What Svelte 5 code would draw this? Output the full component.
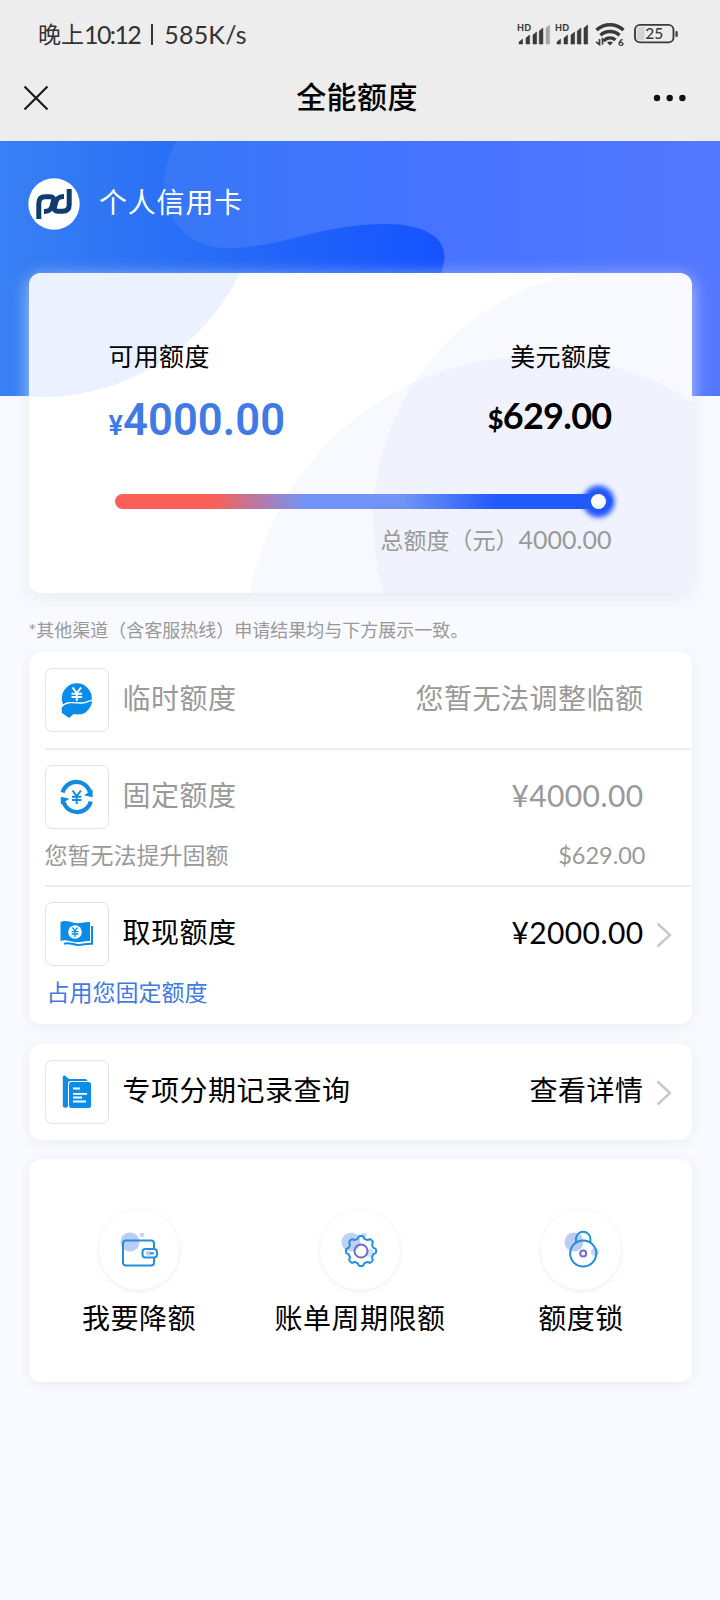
<script lang="ts">
    interface Row {
        id: string;
        label: string;
        value: string;
        muted?: boolean;
        arrow?: boolean;
        note?: string;
        noteValue?: string;
    }

    const limits: Row[] = [
        { id: 'temp', label: '临时额度', value: '您暂无法调整临额', muted: true },
        { id: 'fixed', label: '固定额度', value: '¥4000.00', muted: true, note: '您暂无法提升固额', noteValue: '$629.00' },
        { id: 'cash', label: '取现额度', value: '¥2000.00', arrow: true, note: '占用您固定额度' },
    ];
    const records: Row[] = [
        { id: 'records', label: '专项分期记录查询', value: '查看详情', arrow: true },
    ];
    const actions = [
        { id: 'wallet', label: '我要降额' },
        { id: 'gear', label: '账单周期限额' },
        { id: 'lock', label: '额度锁' },
    ];

    const bars = [
        { x: 3, h: 5 },
        { x: 10, h: 9 },
        { x: 17, h: 12 },
        { x: 23.3, h: 16 },
        { x: 30, h: 19 },
    ];

    const available = 4000;
    const total = 4000;

    /* One half of the bank logo, the other is the same turned by 180° */
    const logoHalf = 'M10.8 41V25.500c0-5 2.500-6.800 6.500-6.800h4.700c3.500 0 4 2 3.300 5l-1.300 4.800c-1.200 3.700-3.200 5-8 5';

    /* Eight rounded teeth around the centre */
    function gearPath(cx: number, cy: number) {
        const pts: string[] = [];
        for (let i = 0; i <= 160; i++) {
            const a = (i / 160) * Math.PI * 2;
            const r = 13.8 + 1.3 * Math.tanh(2.2 * Math.cos(8 * a));
            pts.push(`${(cx + r * Math.cos(a)).toFixed(2)} ${(cy + r * Math.sin(a)).toFixed(2)}`);
        }
        return `M${pts.join('L')}Z`;
    }
</script>

{#snippet rowIcon(id: string)}
    <svg class="row-icon" viewBox="0 0 64 64" width="64" height="64">
        {#if id === 'temp'}
            <circle cx="31.800" cy="30.300" r="15" fill="#0c8ce9" />
            <path
                d="M16.500 40c2-2.500 4-4.300 7.500-4.600 5-.4 10 .8 15 .2 3-.4 4.500-2.300 8.300-2.300-1 5-4 9.700-8 12-3.500 1.500-7.500 1-11 1l-4.300 3.600-7-5Z"
                fill="#0c8ce9" stroke="#fff" stroke-width="2.800" paint-order="stroke"
            />
            <path d="m27.500 19.500 4.300 5.500 4.300-5.500M26.500 25.700h10.600M26.500 29h10.600M31.800 25v8" fill="none" stroke="#fff" stroke-width="2" />
        {:else if id === 'fixed'}
            <g fill="none" stroke="#118be0" stroke-width="4.200">
                <path d="M17.600 27.500a14.200 14.200 0 0 1 27.300-.5" />
                <path d="M45.800 36.500a14.200 14.200 0 0 1-27.300.5" />
            </g>
            <path d="M47.600 24.500v7.800l-8.600-2ZM15.800 39.500v-7.800l8.600 2Z" fill="#118be0" />
            <path d="m27.500 25.500 4.200 5.500 4.200-5.500M27 31.700h9.400M27 35h9.400M31.700 31v8" fill="none" stroke="#118be0" stroke-width="2" />
        {:else if id === 'cash'}
            <path d="M15.500 20c5-2 9-.2 13.500.8 6 1.300 10-1.500 16-.8v19c-6-.6-10 2-16 .9-4.500-.9-8.500-2.800-13.500-1Z" fill="#0c8ce9" />
            <path d="M47 24v17.700c-6-.6-10 2-16 1-4.500-.8-8.500-2.300-12-1" fill="none" stroke="#0c8ce9" stroke-width="2" />
            <circle cx="30" cy="30" r="6.800" fill="#fff" />
            <path d="m27.500 25.500 2.500 3.500 2.500-3.500M26.600 29.700h6.800M26.600 32h6.800M30 29v6" fill="none" stroke="#0c8ce9" stroke-width="1.300" />
        {:else}
            <path d="M17.800 17.300c0-2 1.700-2.300 3-1l3 2.700H40c1.500 0 2.300.8 2.300 2H26c-2.300 0-3 1-3 3.300v21.200c0 3-5.200 3-5.200 0Z" fill="#0c8ce9" />
            <rect x="24" y="22" width="22" height="26" rx="2.500" fill="#0c8ce9" />
            <path d="M28 28.500h7M28 33.800h14M28 37.500h9M28 41.500h13" stroke="#fff" stroke-width="1.800" />
        {/if}
    </svg>
{/snippet}

{#snippet limitRow(row: Row)}
    <div class="row">
        <div class="row-main" class:muted={row.muted}>
            <span class="icon-box">{@render rowIcon(row.id)}</span>
            <span class="label">{row.label}</span>
            <span class="value" class:money={row.value.startsWith('¥')}>{row.value}</span>
            <span class="arrow">
                {#if row.arrow}
                    <svg viewBox="0 0 16 26" width="16" height="26">
                        <path d="m1.500 1.500 12.500 11.500L1.500 24.500" fill="none" stroke="#c8c8c8" stroke-width="2.400" />
                    </svg>
                {/if}
            </span>
        </div>
        {#if row.note}
            <div class="row-note" class:link={!row.muted}>
                <span>{row.note}</span>
                <span>{row.noteValue ?? ''}</span>
            </div>
        {/if}
    </div>
{/snippet}

<div class="screen">
    <header>
        <div class="status">
            <span class="time">
                <span class="cjk">晚上</span><span class="clock">10:12</span><i></i><span>585K/s</span>
            </span>
            <svg viewBox="0 0 164 28" width="164" height="28">
                {#each [0, 38] as dx}
                    <text class="hd" x={1 + dx} y="11">HD</text>
                    {#each bars as b, i}
                        <path
                            d={`M${b.x + dx} 24v${3 - b.h}l3.600-3V24Z`}
                            fill={dx === 0 && i === 4 ? '#a8a8a8' : '#3a3a3a'}
                            stroke={dx === 0 && i === 4 ? '#a8a8a8' : '#3a3a3a'}
                            stroke-width=".6"
                            stroke-linejoin="round"
                        />
                    {/each}
                {/each}
                <g fill="none" stroke="#3a3a3a" stroke-width="3.500">
                    <path d="M80.500 10a20 20 0 0 1 27 0" />
                    <path d="M84.500 15.300a14 14 0 0 1 19 0" />
                    <path d="M88.500 20a8.500 8.500 0 0 1 11 0" />
                </g>
                <path d="M91 22.600a5 5 0 0 1 6 0L94 25.600Z" fill="#3a3a3a" />
                <path d="M83.500 19v5.500l-3.500-2.700M86.500 24.500V19l3 2.500" fill="none" stroke="#3a3a3a" stroke-width="1.700" />
                <text class="six" x="102" y="25.500">6</text>
                <rect x="121" y="7" width="7.500" height="13.500" fill="#d4d4d4" />
                <rect x="119" y="4.900" width="38.500" height="17.500" rx="5" fill="none" stroke="#3a3a3a" stroke-width="1.900" />
                <rect x="159.500" y="11" width="2.200" height="6" rx="1" fill="#3a3a3a" />
                <text class="battery" x="138.300" y="19.200">25</text>
            </svg>
        </div>
        <nav>
            <svg viewBox="0 0 26 26" width="26" height="26">
                <path d="m1.500 1.500 23 23m0-23-23 23" stroke="#1b1b1b" stroke-width="2.200" />
            </svg>
            <h1>全能额度</h1>
            <svg viewBox="0 0 34 8" width="34" height="8" fill="#111">
                <circle cx="4" cy="4" r="3.200" />
                <circle cx="16.700" cy="4" r="3.200" />
                <circle cx="29.400" cy="4" r="3.200" />
            </svg>
        </nav>
    </header>

    <section class="hero">
        <svg class="hero-bg" viewBox="0 0 720 255" width="720" height="255">
            <defs>
                <linearGradient id="base" x1="0" y1="0" x2="1" y2="0">
                    <stop offset="0" stop-color="#3880f4" />
                    <stop offset=".3" stop-color="#266bf6" />
                    <stop offset=".62" stop-color="#1552ff" />
                </linearGradient>
                <linearGradient id="blob" x1="0" y1="0" x2="1" y2="0">
                    <stop offset="0" stop-color="#3777f6" />
                    <stop offset=".5" stop-color="#4673ff" />
                    <stop offset="1" stop-color="#5578ff" />
                </linearGradient>
            </defs>
            <rect width="720" height="255" fill="url(#base)" />
            <path d="M177 0C160 26 160 62 176 82c13 18 30 25 54 25 50 0 90-24 156-24 38 0 62 14 58 37-3 20-16 40-20 136h296V0Z" fill="url(#blob)" />
        </svg>
        <div class="account">
            <svg viewBox="0 0 52 52" width="52" height="52">
                <circle cx="26" cy="26" r="25.700" fill="#fff" />
                <g fill="none" stroke="#103c70" stroke-width="5">
                    <path d={logoHalf} />
                    <path d={logoHalf} transform="rotate(180 26 26)" />
                </g>
            </svg>
            <span>个人信用卡</span>
        </div>
    </section>

    <main>
        <section class="card summary">
            <svg class="summary-bg" viewBox="0 0 663 320" width="663" height="320">
                <circle cx="13" cy="-96" r="220" fill="#ebf1ff" />
                <circle cx="597" cy="248" r="253" fill="#4a6ef0" fill-opacity=".042" />
                <circle cx="506" cy="373" r="290" fill="#4a6ef0" fill-opacity=".038" />
            </svg>
            <div class="amounts">
                <div>
                    <p>可用额度</p>
                    <strong class="cny"><small>¥</small>{available.toFixed(2)}</strong>
                </div>
                <div class="right">
                    <p>美元额度</p>
                    <strong class="usd"><small>$</small>629.00</strong>
                </div>
            </div>
            <div class="track">
                <div class="fill" style="width: {(available / total) * 100}%"><b></b></div>
            </div>
            <p class="total">总额度（元）<span>{total.toFixed(2)}</span></p>
        </section>

        <p class="tip">*其他渠道（含客服热线）申请结果均与下方展示一致。</p>

        <section class="card list">
            {#each limits as row}
                {@render limitRow(row)}
            {/each}
        </section>

        <section class="card list single">
            {#each records as row}
                {@render limitRow(row)}
            {/each}
        </section>

        <section class="card actions">
            {#each actions as a}
                <div class="action">
                    <span class="bubble">
                        <svg viewBox="0 0 80 80" width="80" height="80" fill="none" stroke="#2490d8" stroke-width="2">
                            {#if a.id === 'wallet'}
                                <circle cx="31" cy="32" r="9.500" fill="#b9ccf5" stroke="none" />
                                <circle cx="43" cy="25" r="2.300" fill="#cbd5ee" stroke="none" />
                                <path d="M55 38v-4.500c0-2-1.300-3-3-3H27c-2 0-3 1-3 3v19c0 2 1 3 3 3h25c2 0 3-1 3-3V48" />
                                <rect x="43.500" y="39" width="14.500" height="8.500" rx="3" />
                                <circle cx="49.500" cy="43.300" r="2.500" fill="#b9ccf5" stroke="none" />
                                <path d="M51 43.300h4" />
                            {:else if a.id === 'gear'}
                                <circle cx="31" cy="32" r="9.500" fill="#c0d0f6" stroke="none" />
                                <circle cx="44" cy="25.500" r="2.500" fill="#c9d6f5" stroke="none" />
                                <circle cx="50" cy="43" r="4" fill="#cfe0fa" stroke="none" />
                                <path d={gearPath(41, 41)} />
                                <circle cx="41" cy="41" r="6.500" stroke="#6b6fc9" />
                            {:else}
                                <circle cx="33" cy="32" r="9.500" fill="#bccbf4" stroke="none" />
                                <circle cx="54" cy="42" r="4" fill="#c3d3f6" stroke="none" />
                                <path d="M35 33v-4a7.200 7.200 0 0 1 14.400 0v4" />
                                <circle cx="42.200" cy="43.500" r="13" />
                                <circle cx="42.200" cy="43.500" r="3" stroke="#6b6fc9" />
                            {/if}
                        </svg>
                    </span>
                    <span>{a.label}</span>
                </div>
            {/each}
        </section>
    </main>
</div>

<style>
    :global(body) { background: #f8faff; }

    .screen {
        width: 720px;
        min-height: 1600px;
        background: #f8faff;
        color: #000;
        font-family: Lato, "Noto Sans CJK SC", sans-serif;
        font-size: 28px;
        letter-spacing: 0.5px;
    }
    p, h1 { margin: 0; font-weight: 400; }
    svg   { display: block; flex: none; }

    /* Top bars */
    header  { height: 141px; background: #ededed; }
    .status {
        height: 68px;
        padding: 0 40px 0 38px;
        display: flex;
        align-items: center;
        justify-content: space-between;
        color: #333;
    }
    .time   { display: flex; align-items: center; font-size: 25px; line-height: 30px; letter-spacing: 0.2px; white-space: nowrap; }
    .time i { width: 2px; height: 21px; margin: 0 11px; background: #333; }
    .cjk    { font-size: 23px; letter-spacing: 0; }
    .clock  { letter-spacing: -1.6px; }
    .hd      { font-size: 9px; font-weight: 900; letter-spacing: 0.2px; fill: #3a3a3a; }
    .six     { font-size: 10px; font-weight: 900; letter-spacing: 0; fill: #3a3a3a; }
    .battery { font-size: 15.5px; font-weight: 500; letter-spacing: 0; text-anchor: middle; fill: #3a3a3a; }
    nav {
        height: 60px;
        padding: 0 33px 0 23px;
        display: flex;
        align-items: center;
        justify-content: space-between;
    }
    h1 { margin: -4px 0 0 12px; font-size: 30px; font-weight: 500; line-height: 40px; letter-spacing: 0.4px; }

    /* Blue banner */
    .hero    { position: relative; height: 255px; }
    .hero-bg { position: absolute; inset: 0; }
    .account {
        position: relative;
        display: flex;
        align-items: center;
        gap: 18px;
        padding: 37px 0 0 28px;
        color: #fff;
        line-height: 46px;
    }
    .account span { margin: -4px 0 0 1px; letter-spacing: 0.8px; }

    main  { position: relative; margin: -123px 28.5px 0; }
    .card {
        background: #fff;
        border-radius: 12px;
        box-shadow: 0 2px 12px #ebecf0;
    }

    /* Summary */
    .summary {
        position: relative;
        height: 320px;
        box-sizing: border-box;
        padding: 65px 80px 0;
        overflow: hidden;
        box-shadow: none;
    }
    main::before {
        content: '';
        position: absolute;
        inset: 0 0 auto;
        height: 320px;
        border-radius: 12px;
        box-shadow: 0 4px 18px rgba(226, 228, 234, 0.75);
    }
    .summary-bg { position: absolute; inset: 0; }
    .amounts, .track, .total { position: relative; }
    .amounts { display: flex; justify-content: space-between; height: 161px; }
    .amounts p { font-size: 25px; line-height: 36px; letter-spacing: 0.3px; }
    .right   { text-align: right; }
    strong   { display: block; line-height: 50px; }
    .cny     { color: #417ae4; font: 600 43.5px/50px Roboto, sans-serif; letter-spacing: 0.1px; margin-top: 22px; }
    .cny small { font-size: 27px; }
    .usd     { font-size: 36px; font-weight: 700; letter-spacing: -0.7px; margin-top: 16px; }
    .usd small { font-size: 27px; font-weight: 900; }
    .track { height: 15px; margin: -5px 0 0 6px; }
    .fill  {
        display: flex;
        align-items: center;
        justify-content: flex-end;
        height: 15px;
        border-radius: 8px;
        background: linear-gradient(90deg, #fa6057 20%, #7193f6 38%, #7193f6 58%, #2159fa 77%);
    }
    .fill b {
        width: 15px;
        height: 15px;
        margin-right: 6px;
        border-radius: 50%;
        background: #fff;
        box-shadow: 0 0 5px 8.5px #2159fa;
    }
    .total { margin-top: 13px; text-align: right; color: #999; font-size: 23px; line-height: 34px; letter-spacing: 0; }
    .total span { font-size: 25px; }

    .tip { margin: 26px 0 11px; color: #999; font-size: 18px; line-height: 22px; letter-spacing: 0; white-space: nowrap; }

    /* Limit rows */
    .list  { height: 372px; }
    .single { height: 96px; margin-top: 20px; }
    .row   { margin-left: 16px; }
    .row + .row { border-top: 2px solid #eee; }
    .row-main {
        display: flex;
        align-items: center;
        padding: 16px 20px 16px 0;
        line-height: 40px;
    }
    .row + .row .row-main { padding-top: 15px; }
    .icon-box {
        width: 64px;
        height: 64px;
        box-sizing: border-box;
        border: 1px solid #e3e3e6;
        border-radius: 7px;
    }
    .row-icon { margin: -1px; }
    .label { margin: -4px auto 0 14px; }
    .value { margin-top: -4px; }
    .money { font-size: 30px; letter-spacing: 0.4px; }
    .arrow { width: 16px; margin-left: 12px; padding-top: 1px; }
    .muted { color: #999; }
    .row-note {
        display: flex;
        justify-content: space-between;
        height: 47px;
        margin-top: -7px;
        padding-right: 46px;
        color: #999;
        font-size: 23px;
        line-height: 34px;
        letter-spacing: 0;
    }
    .row-note span + span { font-size: 23.5px; }
    .link { padding-left: 2px; color: #417ae4; }

    /* Shortcuts */
    .actions {
        display: grid;
        grid-template-columns: repeat(3, 1fr);
        height: 223px;
        margin-top: 19px;
    }
    .action {
        display: flex;
        flex-direction: column;
        align-items: center;
        gap: 7px;
        padding-top: 51px;
        line-height: 42px;
    }
    .bubble { border-radius: 50%; box-shadow: 0 1px 5px #e9eaf4; }
</style>
